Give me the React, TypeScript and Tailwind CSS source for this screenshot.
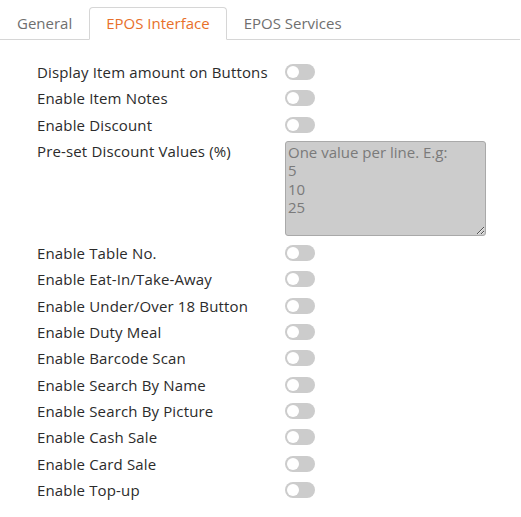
import React, { useState } from "react";

const font = { fontFamily: '"Open Sans", "Liberation Sans", sans-serif' };

const tabs = ["General", "EPOS Interface", "EPOS Services"];

const topRows = ["Display Item amount on Buttons", "Enable Item Notes", "Enable Discount"];
const bottomRows = [
  "Enable Table No.",
  "Enable Eat-In/Take-Away",
  "Enable Under/Over 18 Button",
  "Enable Duty Meal",
  "Enable Barcode Scan",
  "Enable Search By Name",
  "Enable Search By Picture",
  "Enable Cash Sale",
  "Enable Card Sale",
  "Enable Top-up",
];

const Toggle: React.FC = () => {
  const [on, setOn] = useState(false);
  return (
    <button
      onClick={() => setOn(!on)}
      className={`w-[30px] h-[16px] rounded-full flex items-center px-[2px] ${on ? "bg-[#e8702a] justify-end" : "bg-[#cccccc] justify-start"}`}
    >
      <span className="w-[12px] h-[12px] rounded-full bg-white block" />
    </button>
  );
};

const Row: React.FC<{ label: string }> = ({ label }) => (
  <div className="flex items-center h-[26.33px]">
    <div className="w-[248px] text-[15px] tracking-[0.15px] text-[#2b2b2b]">{label}</div>
    <Toggle />
  </div>
);

export default function App() {
  const [active, setActive] = useState(1);
  return (
    <div className="w-[521px] h-[517px] bg-white" style={font}>
      {/* ---------------- Tabs ---------------- */}
      <div className="flex pt-[7px] border-b border-[#d6d6d6] mr-[1px]">
        {tabs.map((t, i) => (
          <div
            key={t}
            onClick={() => setActive(i)}
            className={`h-[33px] px-[16px] flex items-center text-[15px] cursor-pointer -mb-px rounded-t-[4px] border ${
              i === active
                ? "border-[#d6d6d6] border-b-white bg-white text-[#e8702a]"
                : "border-transparent text-[#6f6f6f]"
            }`}
          >
            {t}
          </div>
        ))}
      </div>

      {/* ---------------- Settings ---------------- */}
      <div className="pl-[37px] pt-[19px]">
        {topRows.map((r) => (
          <Row key={r} label={r} />
        ))}
        <div className="flex items-start mb-[4px]">
          <div className="w-[248px] h-[26px] flex items-center text-[15px] tracking-[0.15px] text-[#2b2b2b]">
            Pre-set Discount Values (%)
          </div>
          <textarea
            placeholder={"One value per line. E.g:\n5\n10\n25"}
            className="mt-[3px] w-[201px] h-[95px] bg-[#cccccc] border border-[#a9a9a9] rounded-[3px] px-[2px] pt-[1px] pb-0 text-[15px] leading-[18.5px] text-[#666] placeholder:text-[#7a7a7a] outline-none"
            style={font}
          />
        </div>
        {bottomRows.map((r) => (
          <Row key={r} label={r} />
        ))}
      </div>
    </div>
  );
}
